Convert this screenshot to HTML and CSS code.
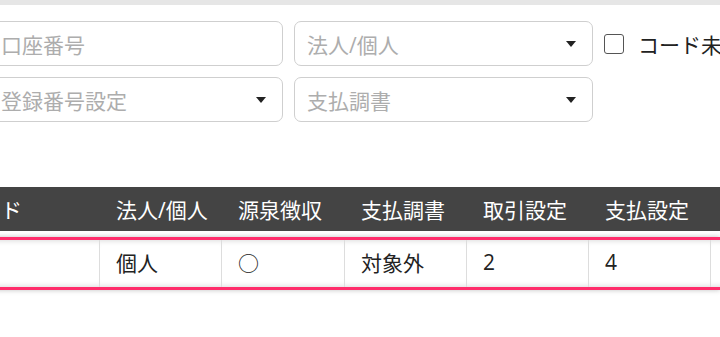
FILE: index.html
```html
<!DOCTYPE html>
<html lang="ja">
<head>
<meta charset="utf-8">
<link rel="stylesheet" href="styles.css">
</head>
<body>
<div class="topbar"></div>
<div class="filters">
  <div class="field"><span class="ph">口座番号</span></div>
  <div class="field select"><span class="ph">法人/個人</span><span class="caret"></span></div>
  <label class="check"><span class="cb"></span><span class="cb-text">コード未設定のみ表示</span></label>
  <div class="field select"><span class="ph">登録番号設定</span><span class="caret"></span></div>
  <div class="field select"><span class="ph">支払調書</span><span class="caret"></span></div>
</div>
<div class="table">
  <div class="thead">
    <div class="th">コード</div>
    <div class="th">法人/個人</div>
    <div class="th">源泉徴収</div>
    <div class="th">支払調書</div>
    <div class="th">取引設定</div>
    <div class="th">支払設定</div>
    <div class="th"></div>
  </div>
  <div class="trow">
    <div class="td"></div>
    <div class="td">個人</div>
    <div class="td">○</div>
    <div class="td">対象外</div>
    <div class="td">2</div>
    <div class="td">4</div>
    <div class="td"></div>
  </div>
</div>
</body>
</html>
```
FILE: styles.css
```css
html, body {
  margin: 0;
  padding: 0;
  background: #fff;
}
body {
  width: 720px;
  height: 337px;
  overflow: hidden;
  font-family: "Open Sans", "Noto Sans CJK JP", sans-serif;
  font-size: 21px;
  color: #222;
}
.topbar {
  height: 5px;
  background: #e6e6e6;
}
.filters {
  margin-top: 16px;
  margin-left: -12px;
  display: grid;
  grid-template-columns: 295px 299px max-content;
  column-gap: 11px;
  row-gap: 11px;
  align-items: center;
}
.field {
  box-sizing: border-box;
  height: 45px;
  border: 1px solid #cfcfcf;
  border-radius: 7px;
  padding: 0 16px 0 12px;
  display: flex;
  align-items: center;
  justify-content: space-between;
  background: #fff;
}
.ph {
  color: #adadad;
  white-space: nowrap;
}
.caret {
  width: 0;
  height: 0;
  border-left: 5px solid transparent;
  border-right: 5px solid transparent;
  border-top: 6px solid #222;
}
.check {
  display: flex;
  align-items: center;
  gap: 14px;
  white-space: nowrap;
}
.cb {
  box-sizing: border-box;
  width: 20px;
  height: 20px;
  border: 1.5px solid #555;
  border-radius: 3px;
  background: #fff;
}
.cb-text {
  color: #222;
}
.table {
  margin-top: 65px;
  margin-left: -57px;
}
.thead, .trow {
  display: grid;
  grid-template-columns: 157px 122px 123px 122px 122px 122px 122px;
}
.thead {
  height: 44px;
  background: #444;
  color: #fff;
  align-items: center;
}
.th {
  padding-left: 16px;
  white-space: nowrap;
}
.trow {
  margin-top: 6px;
  height: 53px;
  box-sizing: border-box;
  border-top: 3px solid #ff2d6b;
  border-bottom: 3px solid #ff2d6b;
  box-shadow: 0 0 5px rgba(0, 0, 0, 0.25);
  background: #fff;
}
.td {
  display: flex;
  align-items: center;
  padding-left: 16px;
  padding-bottom: 3px;
  border-right: 1px solid #dddddd;
  white-space: nowrap;
  box-shadow: inset 0 6px 6px -6px rgba(0, 0, 0, 0.18), inset 0 -6px 6px -6px rgba(0, 0, 0, 0.18);
}
```
